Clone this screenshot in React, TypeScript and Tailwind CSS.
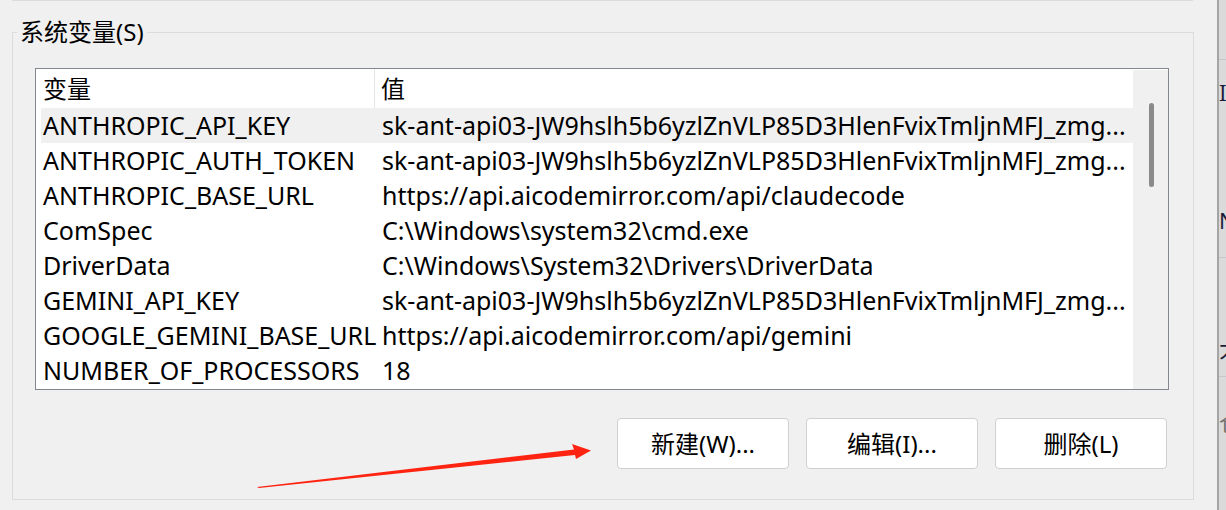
import React from "react";

const rows: [string, string][] = [
  ["ANTHROPIC_API_KEY", "sk-ant-api03-JW9hslh5b6yzlZnVLP85D3HlenFvixTmljnMFJ_zmg..."],
  ["ANTHROPIC_AUTH_TOKEN", "sk-ant-api03-JW9hslh5b6yzlZnVLP85D3HlenFvixTmljnMFJ_zmg..."],
  ["ANTHROPIC_BASE_URL", "https://api.aicodemirror.com/api/claudecode"],
  ["ComSpec", "C:\\Windows\\system32\\cmd.exe"],
  ["DriverData", "C:\\Windows\\System32\\Drivers\\DriverData"],
  ["GEMINI_API_KEY", "sk-ant-api03-JW9hslh5b6yzlZnVLP85D3HlenFvixTmljnMFJ_zmg..."],
  ["GOOGLE_GEMINI_BASE_URL", "https://api.aicodemirror.com/api/gemini"],
  ["NUMBER_OF_PROCESSORS", "18"],
];

const font = {
  fontFamily: '"Noto Sans", "Noto Sans CJK SC", sans-serif',
};

function Button({ label }: { label: string }) {
  return (
    <div className="w-[172px] h-[51px] flex items-center justify-center rounded-[4px] border border-[#d0d0d0] bg-white text-[24px] text-black">
      {label}
    </div>
  );
}

export default function App() {
  return (
    <div
      className="relative w-[1226px] h-[510px] overflow-hidden bg-[#f0f0f0] flex text-black"
      style={font}
    >
      {/* main dialog area */}
      <div className="w-[1217px] shrink-0 flex flex-col">
        <div className="ml-[12px] w-[1181px] h-px bg-[#dcdcdc]" />

        {/* group box */}
        <div className="relative mt-[31px] ml-[12px] w-[1182px] h-[468px] border border-[#dcdcdc] flex flex-col">
          <div className="absolute left-[4px] -top-[19px] px-[3px] bg-[#f0f0f0] text-[24px] leading-[36px]">
            系统变量(S)
          </div>

          {/* list view */}
          <div className="mt-[35px] ml-[22px] w-[1134px] h-[322px] border border-[#828790] bg-white flex">
            <div className="w-[1097px] flex flex-col overflow-hidden">
              <div className="h-[39px] shrink-0 flex items-center text-[24px]">
                <div className="w-[339px] h-full pl-[7px] flex items-center border-r border-[#e5e5e5]">
                  变量
                </div>
                <div className="pl-[6px]">值</div>
              </div>
              {rows.map(([name, value], i) => (
                <div
                  key={name}
                  className={`ml-[5px] h-[35px] shrink-0 flex items-center text-[25px] ${
                    i === 0 ? "bg-[#f0f0f0]" : ""
                  }`}
                >
                  <div className="w-[334px] shrink-0 pl-[2px] whitespace-nowrap">{name}</div>
                  <div className="pl-[7px] whitespace-nowrap">{value}</div>
                </div>
              ))}
            </div>
            <div className="flex-1 mt-px bg-[#f0f0f0] flex justify-center">
              <div className="mt-[33px] ml-[2px] w-[5px] h-[84px] rounded-full bg-[#8a8a8a]" />
            </div>
          </div>

          {/* buttons */}
          <div className="mt-[28px] ml-[604px] flex gap-[17px]">
            <Button label="新建(W)..." />
            <Button label="编辑(I)..." />
            <Button label="删除(L)" />
          </div>
        </div>
      </div>

      {/* neighbouring window edge */}
      <div className="flex-1 flex">
        <div className="w-[2px] bg-[#a4a4a4]" />
        <div className="flex-1 bg-[#dadada] flex flex-col overflow-hidden text-[#1c1c3a] text-[22px]">
          <div className="h-[60px] border-b border-[#c6c6cc]" />
          <div className="h-[78px] pt-[24px] leading-[20px] font-serif">I</div>
          <div className="h-[120px] pt-[72px] leading-[20px] border-b border-[#c6c6cc]">N</div>
          <div className="h-[119px] pt-[80px] leading-[20px] border-b border-[#c6c6cc]">大</div>
          <div className="pt-[34px] leading-[22px] text-[#707070]">仓</div>
        </div>
      </div>

      {/* red annotation arrow */}
      <svg
        className="absolute left-0 top-0 pointer-events-none"
        width="1226"
        height="510"
        viewBox="0 0 1226 510"
      >
        <polygon
          points="257,487 574,449.5 572,444 591,450.5 576,459 575,455 259,488"
          fill="#ff2412"
        />
      </svg>
    </div>
  );
}
